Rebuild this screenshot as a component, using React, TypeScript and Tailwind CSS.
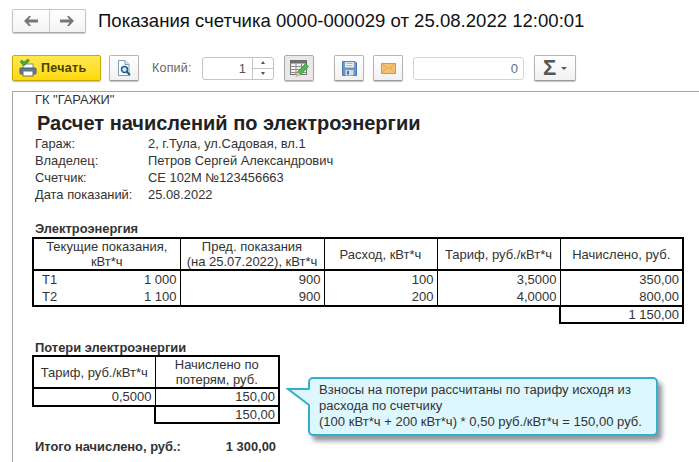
const F = "[font-family:'Liberation_Sans',Arial,sans-serif]";

function ToolButton({ className = "", children }: { className?: string; children: React.ReactNode }) {
  return (
    <div className={"flex h-[26px] w-[30px] items-center justify-center rounded-[2px] border border-[#b5b5b5] border-b-[#9a9a9a] bg-gradient-to-b from-white to-[#f1f1f1] shadow-[0_1px_1px_rgba(0,0,0,0.25)] " + className}>
      {children}
    </div>
  );
}

function Arrow({ dir }: { dir: "l" | "r" }) {
  return (
    <svg width="14" height="10" viewBox="0 0 14 10" className={dir === "r" ? "rotate-180" : ""}>
      <path d="M0 5 L5 0 H7 L4.5 3.5 H14 V6.5 H4.5 L7 10 H5 Z" fill="#757575" />
    </svg>
  );
}

function PrinterIcon() {
  return (
    <svg width="18" height="18" viewBox="0 0 18 18">
      <rect x="4" y="5" width="10" height="5" fill="#fff" stroke="#8a8a8a" />
      <rect x="1" y="9" width="16" height="6" rx="1" fill="#5f7f95" stroke="#3f5a6e" />
      <rect x="4" y="12" width="10" height="5" fill="#fff" stroke="#6f6f6f" />
      <path d="M1 3 L3 1 L5 3 L9 0 L10.500 2 L5 7 Z" fill="#49a83d" stroke="#2f7f2a" strokeWidth="0.5" />
    </svg>
  );
}

function PreviewIcon() {
  return (
    <svg width="14" height="16" viewBox="0 0 14 16">
      <path d="M1.500 0.500 H8 L12 4.500 V15.500 H1.500 Z" fill="#fff" stroke="#7f9db5" />
      <path d="M8 0.500 V4.500 H12" fill="#dbe6ee" stroke="#7f9db5" />
      <circle cx="7.500" cy="9.500" r="3" fill="#cfe6f5" stroke="#1d5f8a" strokeWidth="1.500" />
      <path d="M9.500 11.500 L13 15" stroke="#1d5f8a" strokeWidth="2" />
    </svg>
  );
}

function TableEditIcon() {
  return (
    <svg width="19" height="17" viewBox="0 0 19 17">
      <rect x="0.500" y="0.500" width="16" height="14" fill="#f1f1ef" stroke="#6f6f6f" />
      <rect x="0.500" y="0.500" width="16" height="3" fill="#6f6f6f" />
      <path d="M0.500 6.500 H16.500 M0.500 9.500 H16.500 M0.500 12.500 H16.500 M6 3.500 V14.500 M11.500 3.500 V14.500" stroke="#8f8f8f" fill="none" />
      <path d="M7.500 12 L15.500 3.500 L18.500 6.500 L10.500 15 Z" fill="#55b553" stroke="#2f8a35" strokeWidth="0.700" />
      <path d="M6 16.500 L7.500 12 L10.500 15 Z" fill="#e9cfa6" stroke="#a88a5a" strokeWidth="0.400" />
    </svg>
  );
}

function SaveIcon() {
  return (
    <svg width="15" height="15" viewBox="0 0 15 15">
      <path d="M0.500 0.500 H13 L14.500 2 V14.500 H0.500 Z" fill="#6b97c4" stroke="#4a78a8" />
      <rect x="3" y="1" width="9" height="5.500" fill="#f4f7fa" stroke="#9db6cf" strokeWidth="0.500" />
      <path d="M4.500 2.500 H10.500 M4.500 4.500 H10.500" stroke="#9db6cf" />
      <rect x="3.500" y="9" width="8" height="5.500" fill="#d5dde5" />
      <rect x="5" y="10" width="2" height="3.500" fill="#4a6f96" />
    </svg>
  );
}

function MailIcon() {
  return (
    <svg width="15" height="11" viewBox="0 0 15 11">
      <rect x="0.500" y="0.500" width="14" height="10" fill="#f5c274" stroke="#d79a3f" />
      <path d="M0.500 0.500 L7.500 6 L14.500 0.500 M0.500 10.500 L5.500 4.500 M14.500 10.500 L9.500 4.500" fill="none" stroke="#e4a74d" />
    </svg>
  );
}

const cellBase = "h-[17px] px-[3px] text-right align-middle leading-[17px]";
const totalCell = "h-[15px] px-[3px] text-right align-middle leading-[15px] border-x-2 border-b-2 border-black";

export default function App() {
  return (
    <div className={"h-[462px] w-[699px] overflow-hidden bg-white text-[12.900px] text-[#333] " + F}>
      {/* window title row */}
      <div className="mt-[9px] flex h-[24px] items-center pl-3">
        <div className="flex h-[24px] w-[74px] rounded-[2px] border border-[#c4c4c4] border-b-[#a8a8a8] bg-gradient-to-b from-white to-[#f3f3f3] shadow-[0_1px_1px_rgba(0,0,0,0.2)]">
          <div className="flex flex-1 items-center justify-center border-r border-[#cfcfcf]"><Arrow dir="l" /></div>
          <div className="flex flex-1 items-center justify-center"><Arrow dir="r" /></div>
        </div>
        <div className="ml-[12px] text-[18.570px] leading-[24px] text-[#111]">Показания счетчика 0000-000029 от 25.08.2022 12:00:01</div>
      </div>

      {/* toolbar */}
      <div className="mt-[22px] flex h-[26px] items-center pl-3">
        <div className="flex h-[26px] w-[89px] items-center rounded-[2px] border border-[#c9a800] bg-gradient-to-b from-[#ffe94a] to-[#ffd800] pl-[6px] shadow-[0_1px_1px_rgba(0,0,0,0.25)]">
          <PrinterIcon />
          <span className="ml-[4px] text-[12.500px] font-bold tracking-[0.3px] text-[#4a4200]">Печать</span>
        </div>
        <ToolButton className="ml-[8px]"><PreviewIcon /></ToolButton>
        <span className="ml-[13px] w-[50px] text-[12.500px] tracking-[0.2px] text-[#666]">Копий:</span>
        <div className="flex h-[23px] w-[72px] rounded-[3px] border border-[#c4c4c4] bg-white">
          <span className="flex-1 pr-[6px] text-right text-[13px] leading-[21px] text-[#555]">1</span>
          <div className="flex w-[21px] flex-col border-l border-[#c4c4c4]">
            <div className="flex flex-1 items-center justify-center border-b border-[#c4c4c4]">
              <span className="h-0 w-0 border-x-[2px] border-b-[3px] border-x-transparent border-b-[#555]" />
            </div>
            <div className="flex flex-1 items-center justify-center">
              <span className="h-0 w-0 border-x-[2px] border-t-[3px] border-x-transparent border-t-[#555]" />
            </div>
          </div>
        </div>
        <ToolButton className="ml-[10px] !border-[#aaa] !from-[#e9e9e9] !to-[#e9e9e9]"><TableEditIcon /></ToolButton>
        <ToolButton className="ml-[20px]"><SaveIcon /></ToolButton>
        <ToolButton className="ml-[9px]"><MailIcon /></ToolButton>
        <div className="ml-[10px] h-[23px] w-[111px] rounded-[3px] border border-[#d4d4d4] bg-white pr-[5px] text-right text-[13px] leading-[21px] text-[#5f6f85]">0</div>
        <div className="ml-[10px] flex h-[26px] w-[42px] items-center rounded-[2px] border border-[#b5b5b5] border-b-[#9a9a9a] bg-gradient-to-b from-white to-[#f1f1f1] pl-[8px] shadow-[0_1px_1px_rgba(0,0,0,0.25)]">
          <span className="text-[22px] font-bold leading-[24px] text-[#555]">Σ</span>
          <span className="ml-[5px] h-0 w-0 border-x-[3px] border-t-[3px] border-x-transparent border-t-[#555]" />
        </div>
      </div>

      {/* document */}
      <div className="relative ml-3 mt-[10px] h-[371px] border-l border-t border-[#a5a5a5] pl-[22px]">
        <div className="h-[14px] pt-px leading-[13px]">ГК "ГАРАЖИ"</div>
        <div className="mt-[5px] h-[24px] pl-[2px] text-[20px] font-bold leading-[24px] text-[#222]">Расчет начислений по электроэнергии</div>
        <div className="grid grid-cols-[113px_1fr] leading-[17px]">
          <span>Гараж:</span><span>2, г.Тула, ул.Садовая, вл.1</span>
          <span>Владелец:</span><span>Петров Сергей Александрович</span>
          <span>Счетчик:</span><span>СЕ 102М №123456663</span>
          <span>Дата показаний:</span><span>25.08.2022</span>
        </div>

        <div className="mt-[17px] h-[17px] font-bold leading-[17px]">Электроэнергия</div>

        <table className="-ml-[3px] w-[652px] table-fixed border-collapse text-[13px]">
          <colgroup>
            <col className="w-[147px]" />
            <col className="w-[144px]" />
            <col className="w-[113px]" />
            <col className="w-[123px]" />
            <col className="w-[123px]" />
          </colgroup>
          <tbody>
            <tr className="h-[32px] border-2 border-black text-center leading-[15px]">
              <td className="border-r border-black">Текущие показания,<br />кВт*ч</td>
              <td className="border-r border-black">Пред. показания<br />(на 25.07.2022), кВт*ч</td>
              <td className="border-r border-black">Расход, кВт*ч</td>
              <td className="border-r border-black">Тариф, руб./кВт*ч</td>
              <td>Начислено, руб.</td>
            </tr>
            <tr className="border-x-2 border-t border-black">
              <td className={cellBase + " border-r border-black"}>
                <div className="flex justify-between pl-[5px]"><span>Т1</span><span>1 000</span></div>
              </td>
              <td className={cellBase + " border-r border-black"}>900</td>
              <td className={cellBase + " border-r border-black"}>100</td>
              <td className={cellBase + " border-r border-black"}>3,5000</td>
              <td className={cellBase}>350,00</td>
            </tr>
            <tr className="border-x-2 border-b-2 border-black">
              <td className={cellBase + " border-r border-black"}>
                <div className="flex justify-between pl-[5px]"><span>Т2</span><span>1 100</span></div>
              </td>
              <td className={cellBase + " border-r border-black"}>900</td>
              <td className={cellBase + " border-r border-black"}>200</td>
              <td className={cellBase + " border-r border-black"}>4,0000</td>
              <td className={cellBase}>800,00</td>
            </tr>
            <tr>
              <td colSpan={4} />
              <td className={totalCell}>1 150,00</td>
            </tr>
          </tbody>
        </table>

        <div className="mt-[16px] h-[15px] font-bold leading-[16px]">Потери электроэнергии</div>

        <table className="-ml-[3px] w-[246px] table-fixed border-collapse text-[13px]">
          <colgroup>
            <col className="w-[122px]" />
            <col className="w-[124px]" />
          </colgroup>
          <tbody>
            <tr className="h-[31px] border-2 border-black text-center leading-[15px]">
              <td className="border-r border-black">Тариф, руб./кВт*ч</td>
              <td>Начислено по<br />потерям, руб.</td>
            </tr>
            <tr className="border-x-2 border-t border-b-2 border-black">
              <td className="h-[16px] border-r border-black px-[3px] text-right align-middle leading-[16px]">0,5000</td>
              <td className="h-[16px] px-[3px] text-right align-middle leading-[16px]">150,00</td>
            </tr>
            <tr>
              <td />
              <td className={totalCell}>150,00</td>
            </tr>
          </tbody>
        </table>

        <div className="mt-[14px] flex w-[241px] justify-between font-bold leading-[17px]">
          <span>Итого начислено, руб.:</span>
          <span>1 300,00</span>
        </div>

        {/* callout */}
        <div className="absolute left-[295px] top-[285px] h-[59px] w-[350px] rounded-[5px] border-2 border-[#35aecb] bg-[#dcf7fe] pl-[9px] pt-[3px] text-[13.060px] leading-[16px] text-[#333] shadow-[4px_5px_5px_rgba(70,80,90,0.6)]">
          Взносы на потери рассчитаны по тарифу исходя из<br />расхода по счетчику<br />(100 кВт*ч + 200 кВт*ч) * 0,50 руб./кВт*ч = 150,00 руб.
        </div>
        <svg className="absolute left-[273px] top-[294px]" width="26" height="22" viewBox="0 0 26 22">
          <path d="M2 3 L24 3.500 V19 Z" fill="#dcf7fe" />
          <path d="M23 3 L2 3 L23 19" fill="none" stroke="#35aecb" strokeWidth="2" />
        </svg>
      </div>
    </div>
  );
}
